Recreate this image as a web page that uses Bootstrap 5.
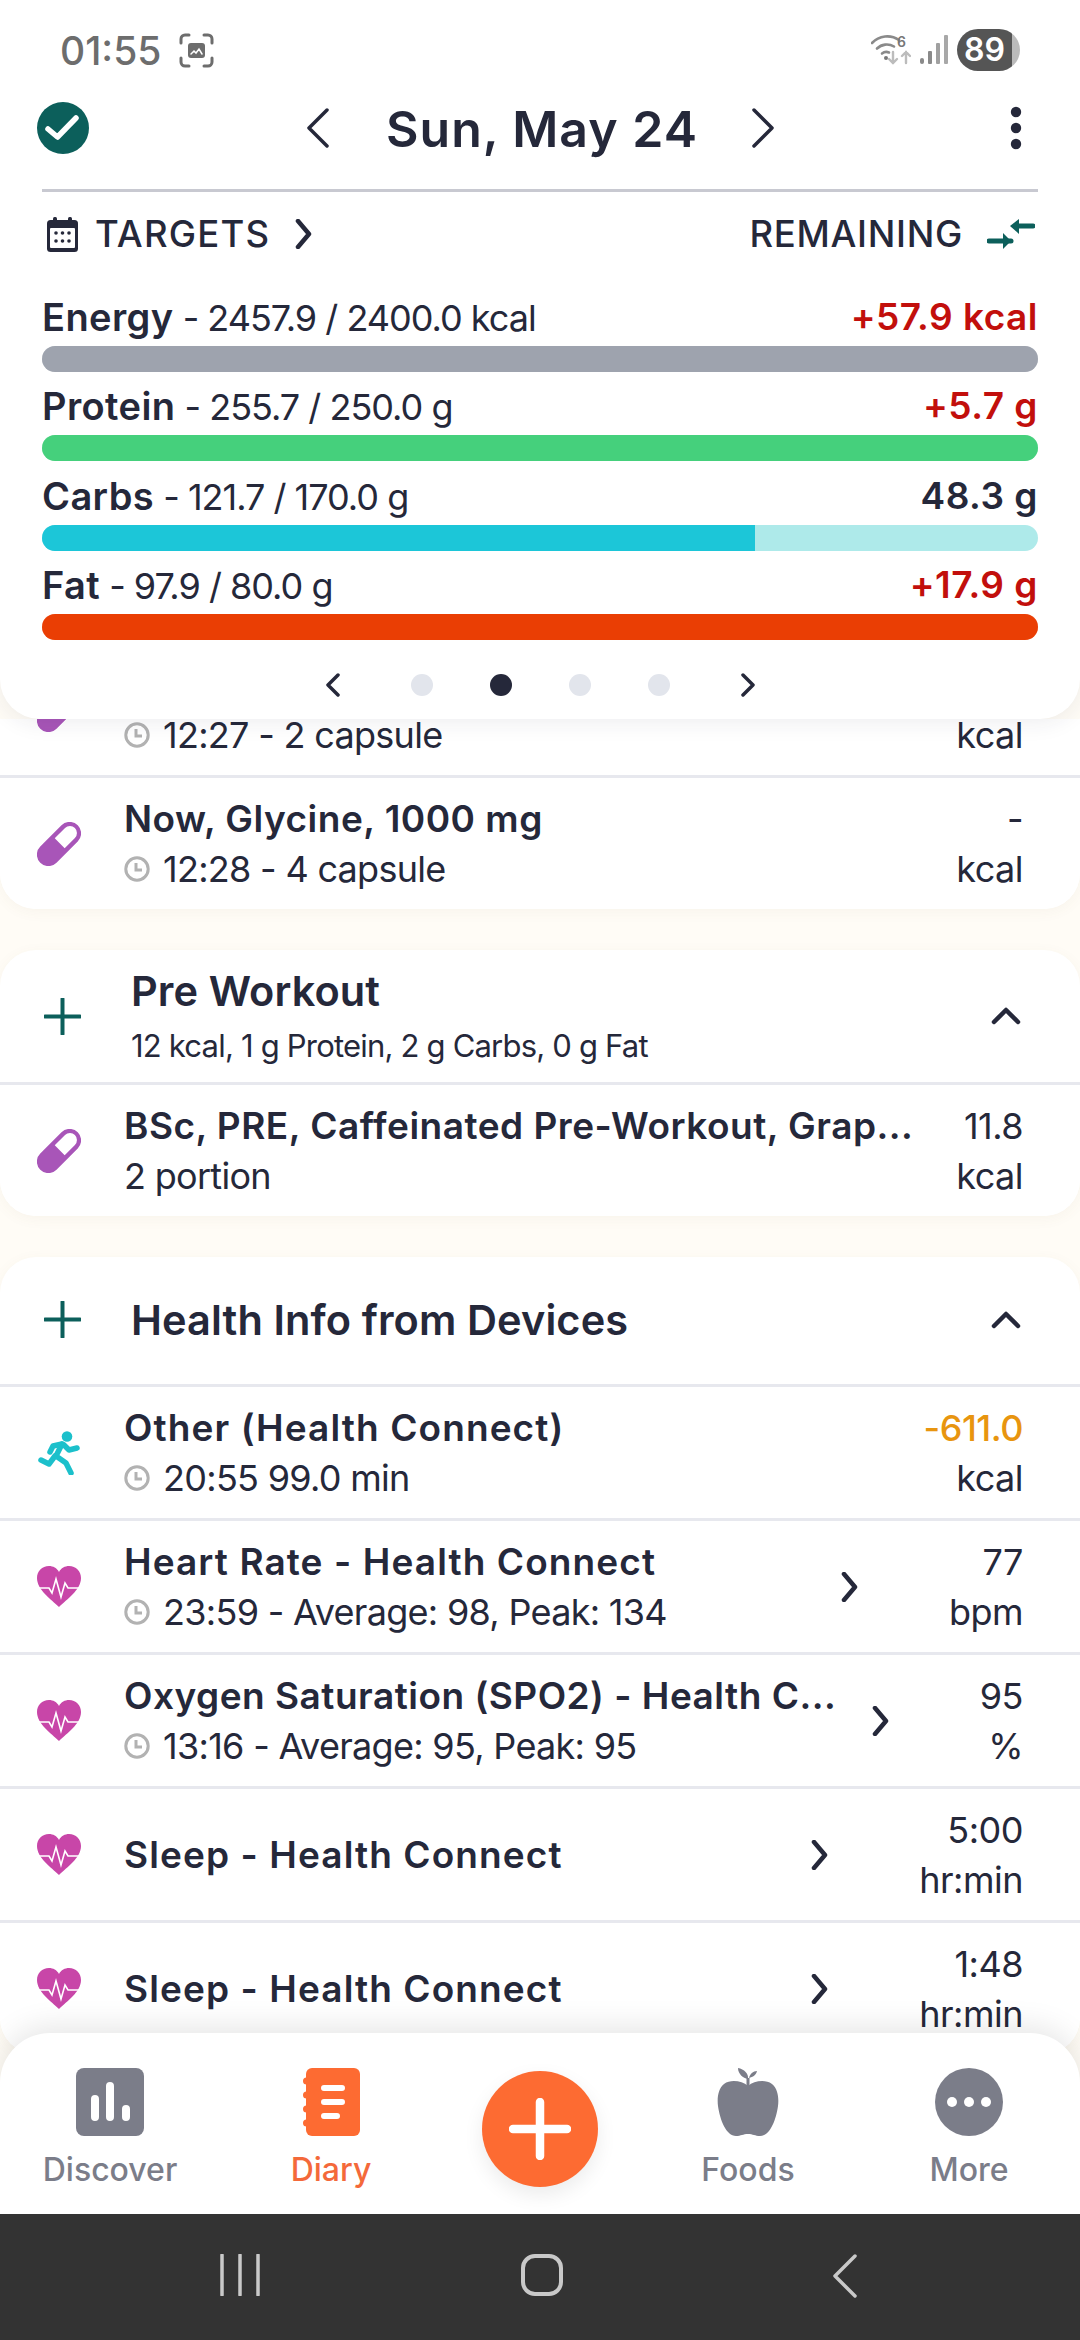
<!DOCTYPE html>
<html lang="en">
<head>
  <meta charset="UTF-8" />
  <meta name="viewport" content="width=device-width, initial-scale=1" />
  <title>Diary</title>
  <link href="https://cdn.jsdelivr.net/npm/bootstrap@5.3.0/dist/css/bootstrap.min.css" rel="stylesheet" />
  <style>
    body { width: 1080px; height: 2340px; overflow: hidden; background: #fffcf6; color: #25283a; font-family: Inter, "Liberation Sans", sans-serif; }
    .app-shell { height: 2340px; }

    .top-panel { position: relative; z-index: 3; flex: none; height: 719px; background: #fff; border-radius: 0 0 40px 40px; box-shadow: 0 4px 22px rgba(40, 40, 60, .08); }
    .status-row { height: 100px; padding: 0 60px 0 60px; color: #6d6d6d; }
    .status-time { font-size: 39px; font-weight: 500; line-height: 1; }
    .battery-pill { position: relative; width: 63px; height: 42px; border-radius: 21px; background: linear-gradient(90deg, #555 0, #555 88%, #bbb 88%); color: #fff; font-size: 32px; font-weight: 600; line-height: 42px; padding-left: 7px; }
    .date-row { height: 56px; padding: 0 58px 0 37px; }
    .date-title { font-size: 50px; font-weight: 600; line-height: 56px; letter-spacing: 1px; position: relative; top: 1px; }
    .top-rule { height: 3px; margin: 33px 42px 0; background: #c8c9d1; }
    .targets-row { height: 50px; margin-top: 17px; padding: 0 45px 0 47px; font-size: 36.5px; font-weight: 500; letter-spacing: 1.200px; }
    .remaining-label { letter-spacing: .7px; }

    .macro-list { margin-top: 36px; padding: 0 42px; }
    .macro-block { margin-bottom: 12.33px; }
    .macro-line { height: 44px; line-height: 44px; font-size: 36px; letter-spacing: -1px; white-space: nowrap; }
    .macro-line b { font-size: 38px; font-weight: 600; letter-spacing: .4px; }
    .macro-over { color: #c20f0c; font-size: 37px; font-weight: 600; letter-spacing: .5px; }
    .macro-left { font-size: 37px; font-weight: 600; letter-spacing: .5px; }
    .macro-bar { height: 26px; margin-top: 7px; border-radius: 13px; }
    .macro-bar .progress-bar { border-radius: 0; }
    .pager-row { height: 44px; margin-top: 23px; }
    .pager-dot { width: 22px; height: 22px; border-radius: 50%; background: #e2e5ec; }
    .pager-dot.is-active { background: #25283a; }

    .feed-area { flex: 1 1 0; min-height: 0; overflow: hidden; }
    .feed-inner { margin-top: -75px; }
    .meal-card { border: 0; border-radius: 36px; background: #fff; margin-bottom: 41px; box-shadow: 0 3px 14px rgba(120, 100, 60, .05); overflow: hidden; }
    .meal-head { padding: 0 59px 0 44px; }
    .meal-head.has-sub { height: 132px; }
    .meal-head.no-sub { height: 127px; padding-bottom: 2px; }
    .meal-name { font-size: 41.5px; font-weight: 600; line-height: 50px; letter-spacing: .1px; }
    .meal-sum { font-size: 31px; line-height: 42px; margin-top: 9px; letter-spacing: -.8px; }
    .plus-gap { width: 37px; margin-right: 50px; flex: none; }

    .list-group-flush > .entry-row { height: 134px; padding: 0 57px 0 37px; border-width: 3px 0 0; border-style: solid; border-color: #e7e8ee; border-radius: 0; background: #fff; color: inherit; gap: 43px; }
    .list-group-flush > .entry-row.is-first { border-top-width: 0; height: 131px; }
    .entry-icon { width: 44px; flex: none; }
    .entry-text { flex: 1 1 0; min-width: 0; }
    .entry-title { font-size: 37px; font-weight: 600; line-height: 50px; letter-spacing: 1.100px; white-space: nowrap; overflow: hidden; }
    .entry-title.is-long { letter-spacing: .5px; }
    .entry-sub { font-size: 36px; line-height: 50px; letter-spacing: -.7px; white-space: nowrap; gap: 13px; }
    .entry-next { flex: none; margin-right: 47px; margin-left: -18px; }
    .entry-value { flex: none; font-size: 36px; line-height: 50px; letter-spacing: -.5px; text-align: right; }
    .burn-value { color: #e8950f; font-weight: 500; }

    .tab-panel { position: relative; z-index: 2; flex: none; height: 181px; margin-top: -60px; background: #fff; border-radius: 50px 50px 0 0; box-shadow: 0 -6px 30px rgba(0, 0, 0, .1); display: grid; grid-template-columns: 220px 222px 196px 220px 222px; }
    .tab-item { padding-top: 35px; color: #7b7d89; font-size: 32px; font-weight: 500; }
    .tab-item.is-on { color: #f4693a; }
    .tab-icon { height: 68px; }
    .tab-label { line-height: 40px; margin-top: 14px; }
    .add-fab { width: 116px; height: 116px; margin-top: 38px; border-radius: 50%; background: #fd6b32; box-shadow: 0 8px 20px rgba(0, 0, 0, .08); }
    .system-bar { flex: none; height: 126px; background: #333; position: relative; z-index: 2; }
    .system-bar svg { position: absolute; top: 40px; }
  </style>
</head>
<body>

<svg width="0" height="0" class="d-block" style="position:absolute">
  <defs>
    <symbol id="pill" viewBox="0 0 44 44">
      <g transform="rotate(-45 22 22)">
        <rect x="-4.500" y="10.500" width="53" height="23" rx="11.500" fill="#a855b8" />
        <path d="M23 15h14.500a7 7 0 0 1 0 14H23z" fill="#fff" />
      </g>
    </symbol>
    <symbol id="heart" viewBox="0 0 44 41">
      <path d="M22 41C14 33 0 24 0 12 0 5 5 0 12 0c4 0 8 2 10 6 2-4 6-6 10-6 7 0 12 5 12 12 0 12-14 21-22 29z" fill="#c846a8" />
      <path d="M2 22h10l3 5 4-14 5 18 4-14 3 5h11" fill="none" stroke="#fff" stroke-width="1.600" />
    </symbol>
    <symbol id="clock" viewBox="0 0 26 26">
      <circle cx="13" cy="13" r="11.200" fill="none" stroke="#b2b2b2" stroke-width="3" />
      <path d="M12 7v7h6" fill="none" stroke="#b2b2b2" stroke-width="3" />
    </symbol>
    <symbol id="next" viewBox="0 0 18 30">
      <path d="M3 2l11 13L3 28" fill="none" stroke="#25283a" stroke-width="4.500" stroke-linecap="round" stroke-linejoin="round" />
    </symbol>
    <symbol id="plus" viewBox="0 0 37 37">
      <path d="M18.500 1v35M1 18.500h35" fill="none" stroke="#0c5f5b" stroke-width="4" stroke-linecap="round" />
    </symbol>
    <symbol id="up" viewBox="0 0 30 18">
      <path d="M3 15L15 3l12 12" fill="none" stroke="#25283a" stroke-width="4.500" stroke-linecap="round" stroke-linejoin="round" />
    </symbol>
  </defs>
</svg>

<div class="app-shell d-flex flex-column">
  <header class="top-panel">
    <div class="status-row d-flex align-items-center">
      <span class="status-time">01:55</span>
      <svg style="margin-left:18px" width="35" height="35" viewBox="0 0 35 35" fill="none" stroke="#6d6d6d" stroke-width="3" stroke-linecap="round">
        <path d="M2 10V6a4 4 0 0 1 4-4h4M25 2h4a4 4 0 0 1 4 4v4M33 25v4a4 4 0 0 1-4 4h-4M10 33H6a4 4 0 0 1-4-4v-4" />
        <rect x="9" y="10" width="17" height="15" rx="3" fill="#6d6d6d" stroke="none" />
        <path d="M12 21l3-3 2 2 3-4 3 5" stroke="#fff" stroke-width="1.500" />
      </svg>
      <svg class="ms-auto" width="40" height="32" viewBox="0 0 40 32" fill="none" stroke-linecap="round">
        <g stroke="#8a8a8a" stroke-width="2.600">
          <path d="M1 9a21 21 0 0 1 27-3" />
          <path d="M6 14.500a14 14 0 0 1 17-2" />
          <path d="M11 19.500a7 7 0 0 1 7-1" />
        </g>
        <circle cx="15" cy="24" r="2" fill="#777" />
        <text x="26" y="13" font-size="14" font-weight="600" fill="#777" font-family="Inter, sans-serif">6</text>
        <path d="M22 18v11m-4-4l4 4 4-4" stroke="#bcbcbc" stroke-width="2.400" />
        <path d="M35 29V18m-4 4l4-4 4 4" stroke="#bcbcbc" stroke-width="2.400" />
      </svg>
      <svg class="ms-2" width="30" height="32" viewBox="0 0 30 32" fill="#8a8a8a">
        <rect x="1" y="24" width="4" height="6" rx="2" />
        <rect x="9" y="17" width="4" height="13" rx="1" />
        <rect x="17" y="9" width="4" height="21" rx="1" fill="#a0a0a0" />
        <rect x="25" y="1" width="4" height="29" rx="1" fill="#a8a8a8" />
      </svg>
      <div class="battery-pill ms-2">89</div>
    </div>

    <div class="date-row d-flex align-items-center position-relative">
      <svg width="52" height="52" viewBox="0 0 52 52">
        <circle cx="26" cy="26" r="26" fill="#0c5f5b" />
        <path d="M11 27l9.500 8L39 16" fill="none" stroke="#fff" stroke-width="5.500" stroke-linecap="round" stroke-linejoin="round" />
      </svg>
      <div class="d-flex align-items-center" style="margin-left:217px">
        <svg width="24" height="40" viewBox="0 0 24 40"><path d="M21 2L3 20l18 18" fill="none" stroke="#25283a" stroke-width="3.500" stroke-linecap="round" stroke-linejoin="round" /></svg>
        <span class="date-title" style="margin:0 53px 0 56px">Sun, May 24</span>
        <svg width="24" height="40" viewBox="0 0 24 40"><path d="M3 2l18 18L3 38" fill="none" stroke="#25283a" stroke-width="3.500" stroke-linecap="round" stroke-linejoin="round" /></svg>
      </div>
      <svg class="ms-auto" width="12" height="44" viewBox="0 0 12 44" fill="#25283a">
        <circle cx="6" cy="6" r="5.200" /><circle cx="6" cy="22" r="5.200" /><circle cx="6" cy="38" r="5.200" />
      </svg>
    </div>

    <div class="top-rule"></div>

    <div class="targets-row d-flex align-items-center">
      <svg width="31" height="35" viewBox="0 0 31 35">
        <rect y="3" width="31" height="32" rx="3.500" fill="#25283a" />
        <rect x="6" width="4" height="8" rx="1.500" fill="#25283a" /><rect x="21" width="4" height="8" rx="1.500" fill="#25283a" />
        <rect x="3" y="11" width="25" height="20" rx="1" fill="#fff" />
        <g fill="#25283a"><circle cx="9" cy="16" r="1.800" /><circle cx="15.500" cy="16" r="1.800" /><circle cx="22" cy="16" r="1.800" /><circle cx="9" cy="24" r="1.800" /><circle cx="15.500" cy="24" r="1.800" /><circle cx="22" cy="24" r="1.800" /></g>
      </svg>
      <span style="margin-left:17px">TARGETS</span>
      <svg style="margin-left:25px" width="18" height="30"><use href="#next" /></svg>
      <span class="remaining-label ms-auto">REMAINING</span>
      <svg style="margin-left:24px" width="48" height="30" viewBox="0 0 48 30" fill="none" stroke="#0c5f5b" stroke-width="5" stroke-linecap="round">
        <path d="M2 22h22" /><path d="M16 14l8 8-8 8" fill="#0c5f5b" stroke="none" /><path d="M46 7H28" />
        <path d="M32 0l-9 7 9 8z" fill="#0c5f5b" stroke="none" />
      </svg>
    </div>

    <div class="macro-list">
      <div class="macro-block">
        <div class="macro-line d-flex justify-content-between"><span><b>Energy</b> - 2457.9 / 2400.0 kcal</span><span class="macro-over">+57.9 kcal</span></div>
        <div class="progress macro-bar" style="background:#dfe1e6"><div class="progress-bar" style="width:100%;background:#9ea3ae"></div></div>
      </div>
      <div class="macro-block">
        <div class="macro-line d-flex justify-content-between"><span><b>Protein</b> - 255.7 / 250.0 g</span><span class="macro-over">+5.7 g</span></div>
        <div class="progress macro-bar" style="background:#c5f0d5"><div class="progress-bar" style="width:100%;background:#45d07c"></div></div>
      </div>
      <div class="macro-block">
        <div class="macro-line d-flex justify-content-between"><span><b>Carbs</b> - 121.7 / 170.0 g</span><span class="macro-left">48.3 g</span></div>
        <div class="progress macro-bar" style="background:#aeeaea"><div class="progress-bar" style="width:71.6%;background:#1cc6d8"></div></div>
      </div>
      <div class="macro-block">
        <div class="macro-line d-flex justify-content-between"><span><b>Fat</b> - 97.9 / 80.0 g</span><span class="macro-over">+17.9 g</span></div>
        <div class="progress macro-bar" style="background:#f9c9b5"><div class="progress-bar" style="width:100%;background:#ea3e04"></div></div>
      </div>
      <div class="pager-row d-flex align-items-center justify-content-center" style="gap:57px">
        <svg width="16" height="24" viewBox="0 0 16 24" style="margin-right:13px"><path d="M13 2L3 12l10 10" fill="none" stroke="#25283a" stroke-width="3.500" stroke-linecap="round" stroke-linejoin="round" /></svg>
        <span class="pager-dot"></span><span class="pager-dot is-active"></span><span class="pager-dot"></span><span class="pager-dot"></span>
        <svg width="16" height="24" viewBox="0 0 16 24" style="margin-left:13px"><path d="M3 2l10 10L3 22" fill="none" stroke="#25283a" stroke-width="3.500" stroke-linecap="round" stroke-linejoin="round" /></svg>
      </div>
    </div>
  </header>

  <main class="feed-area">
    <div class="feed-inner">
      <section class="card meal-card">
        <div class="list-group list-group-flush">
          <div class="list-group-item entry-row is-first d-flex align-items-center">
            <svg class="entry-icon" height="44"><use href="#pill" /></svg>
            <div class="entry-text">
              <div class="entry-title">&nbsp;</div>
              <div class="entry-sub d-flex align-items-center"><svg width="26" height="26"><use href="#clock" /></svg>12:27 - 2 capsule</div>
            </div>
            <div class="entry-value">&nbsp;<br />kcal</div>
          </div>
          <div class="list-group-item entry-row d-flex align-items-center">
            <svg class="entry-icon" height="44"><use href="#pill" /></svg>
            <div class="entry-text">
              <div class="entry-title is-long">Now, Glycine, 1000 mg</div>
              <div class="entry-sub d-flex align-items-center"><svg width="26" height="26"><use href="#clock" /></svg>12:28 - 4 capsule</div>
            </div>
            <div class="entry-value">-<br />kcal</div>
          </div>
        </div>
      </section>

      <section class="card meal-card">
        <div class="meal-head has-sub d-flex align-items-center">
          <svg class="plus-gap" height="37"><use href="#plus" /></svg>
          <div class="flex-grow-1">
            <div class="meal-name">Pre Workout</div>
            <div class="meal-sum">12 kcal, 1 g Protein, 2 g Carbs, 0 g Fat</div>
          </div>
          <svg width="30" height="18"><use href="#up" /></svg>
        </div>
        <div class="list-group list-group-flush">
          <div class="list-group-item entry-row d-flex align-items-center">
            <svg class="entry-icon" height="44"><use href="#pill" /></svg>
            <div class="entry-text">
              <div class="entry-title is-long">BSc, PRE, Caffeinated Pre-Workout, Grap...</div>
              <div class="entry-sub">2 portion</div>
            </div>
            <div class="entry-value">11.8<br />kcal</div>
          </div>
        </div>
      </section>

      <section class="card meal-card">
        <div class="meal-head no-sub d-flex align-items-center">
          <svg class="plus-gap" height="37"><use href="#plus" /></svg>
          <div class="meal-name flex-grow-1">Health Info from Devices</div>
          <svg width="30" height="18"><use href="#up" /></svg>
        </div>
        <div class="list-group list-group-flush">
          <div class="list-group-item entry-row d-flex align-items-center">
            <svg class="entry-icon" height="44" viewBox="0 0 44 44">
              <circle cx="30" cy="5.500" r="5.300" fill="#1cc0cb" />
              <g fill="none" stroke="#1cc0cb" stroke-width="5.500" stroke-linecap="round" stroke-linejoin="round">
                <path d="M25 13l-6 12 10 7 5 10" /><path d="M25 13l-9 2-3 6" /><path d="M27 14l5 5 8-2" /><path d="M18 25l-6 8-8-4" />
              </g>
            </svg>
            <div class="entry-text">
              <div class="entry-title">Other (Health Connect)</div>
              <div class="entry-sub d-flex align-items-center"><svg width="26" height="26"><use href="#clock" /></svg>20:55 99.0 min</div>
            </div>
            <div class="entry-value"><span class="burn-value">-611.0</span><br />kcal</div>
          </div>
          <div class="list-group-item entry-row d-flex align-items-center">
            <svg class="entry-icon" height="41"><use href="#heart" /></svg>
            <div class="entry-text">
              <div class="entry-title">Heart Rate - Health Connect</div>
              <div class="entry-sub d-flex align-items-center"><svg width="26" height="26"><use href="#clock" /></svg>23:59 - Average: 98, Peak: 134</div>
            </div>
            <svg class="entry-next" width="18" height="30"><use href="#next" /></svg>
            <div class="entry-value">77<br />bpm</div>
          </div>
          <div class="list-group-item entry-row d-flex align-items-center">
            <svg class="entry-icon" height="41"><use href="#heart" /></svg>
            <div class="entry-text">
              <div class="entry-title is-long">Oxygen Saturation (SPO2) - Health C...</div>
              <div class="entry-sub d-flex align-items-center"><svg width="26" height="26"><use href="#clock" /></svg>13:16 - Average: 95, Peak: 95</div>
            </div>
            <svg class="entry-next" width="18" height="30"><use href="#next" /></svg>
            <div class="entry-value">95<br />%</div>
          </div>
          <div class="list-group-item entry-row d-flex align-items-center">
            <svg class="entry-icon" height="41"><use href="#heart" /></svg>
            <div class="entry-text"><div class="entry-title">Sleep - Health Connect</div></div>
            <svg class="entry-next" width="18" height="30"><use href="#next" /></svg>
            <div class="entry-value">5:00<br />hr:min</div>
          </div>
          <div class="list-group-item entry-row d-flex align-items-center">
            <svg class="entry-icon" height="41"><use href="#heart" /></svg>
            <div class="entry-text"><div class="entry-title">Sleep - Health Connect</div></div>
            <svg class="entry-next" width="18" height="30"><use href="#next" /></svg>
            <div class="entry-value">1:48<br />hr:min</div>
          </div>
        </div>
      </section>
    </div>
  </main>

  <nav class="tab-panel">
    <div class="tab-item d-flex flex-column align-items-center">
      <svg class="tab-icon" width="68" viewBox="0 0 68 68">
        <rect width="68" height="68" rx="8" fill="#7b7d89" />
        <path d="M19 31v18M34 18v31M50 41v8" stroke="#fff" stroke-width="8" stroke-linecap="round" />
      </svg>
      <span class="tab-label">Discover</span>
    </div>
    <div class="tab-item is-on d-flex flex-column align-items-center">
      <svg class="tab-icon" width="57" viewBox="0 0 57 68" fill="#fd6b32">
        <rect x="3" width="54" height="68" rx="6" />
        <circle cx="3.500" cy="13" r="3.500" /><circle cx="3.500" cy="27" r="3.500" /><circle cx="3.500" cy="41" r="3.500" /><circle cx="3.500" cy="55" r="3.500" />
        <path d="M21 20h18M21 34h18M21 48h13" stroke="#fff" stroke-width="6" stroke-linecap="round" />
      </svg>
      <span class="tab-label">Diary</span>
    </div>
    <div class="d-flex justify-content-center align-items-start">
      <div class="add-fab d-flex align-items-center justify-content-center">
        <svg width="62" height="62" viewBox="0 0 62 62"><path d="M31 4v54M4 31h54" stroke="#fff" stroke-width="8.500" stroke-linecap="round" /></svg>
      </div>
    </div>
    <div class="tab-item d-flex flex-column align-items-center">
      <svg class="tab-icon" width="62" viewBox="0 0 62 68" fill="#7b7d89">
        <path d="M31 18C25 13 14 11 7 16 1 21 0 30 1 38c2 14 8 30 18 30 5 0 7-2 12-2s7 2 12 2c10 0 16-16 18-30 1-8 0-17-6-22-7-5-18-3-24 2z" />
        <path d="M29.500 10h3v8h-3z" />
        <path d="M21 0c0 6 5 10 10 11 1-5-4-10-10-11zM32 10c4-1 7-3 8-7-4 0-7 3-8 7z" />
      </svg>
      <span class="tab-label">Foods</span>
    </div>
    <div class="tab-item d-flex flex-column align-items-center">
      <svg class="tab-icon" width="68" viewBox="0 0 68 68">
        <circle cx="34" cy="34" r="34" fill="#7b7d89" />
        <circle cx="17" cy="34" r="5" fill="#fff" /><circle cx="34" cy="34" r="5" fill="#fff" /><circle cx="51" cy="34" r="5" fill="#fff" />
      </svg>
      <span class="tab-label">More</span>
    </div>
  </nav>

  <div class="system-bar">
    <svg style="left:220px" width="40" height="42" viewBox="0 0 40 42"><path d="M2 1v40M20 1v40M38 1v40" stroke="#c9c9c9" stroke-width="3.500" stroke-linecap="round" /></svg>
    <svg style="left:521px" width="42" height="42" viewBox="0 0 42 42"><rect x="2" y="2" width="38" height="38" rx="12" fill="none" stroke="#c9c9c9" stroke-width="4" /></svg>
    <svg style="left:832px" width="26" height="44" viewBox="0 0 26 44"><path d="M23 2L3 22l20 20" fill="none" stroke="#c9c9c9" stroke-width="3.500" stroke-linecap="round" stroke-linejoin="round" /></svg>
  </div>
</div>

<script src="https://cdn.jsdelivr.net/npm/bootstrap@5.3.0/dist/js/bootstrap.bundle.min.js"></script>
</body>
</html>
